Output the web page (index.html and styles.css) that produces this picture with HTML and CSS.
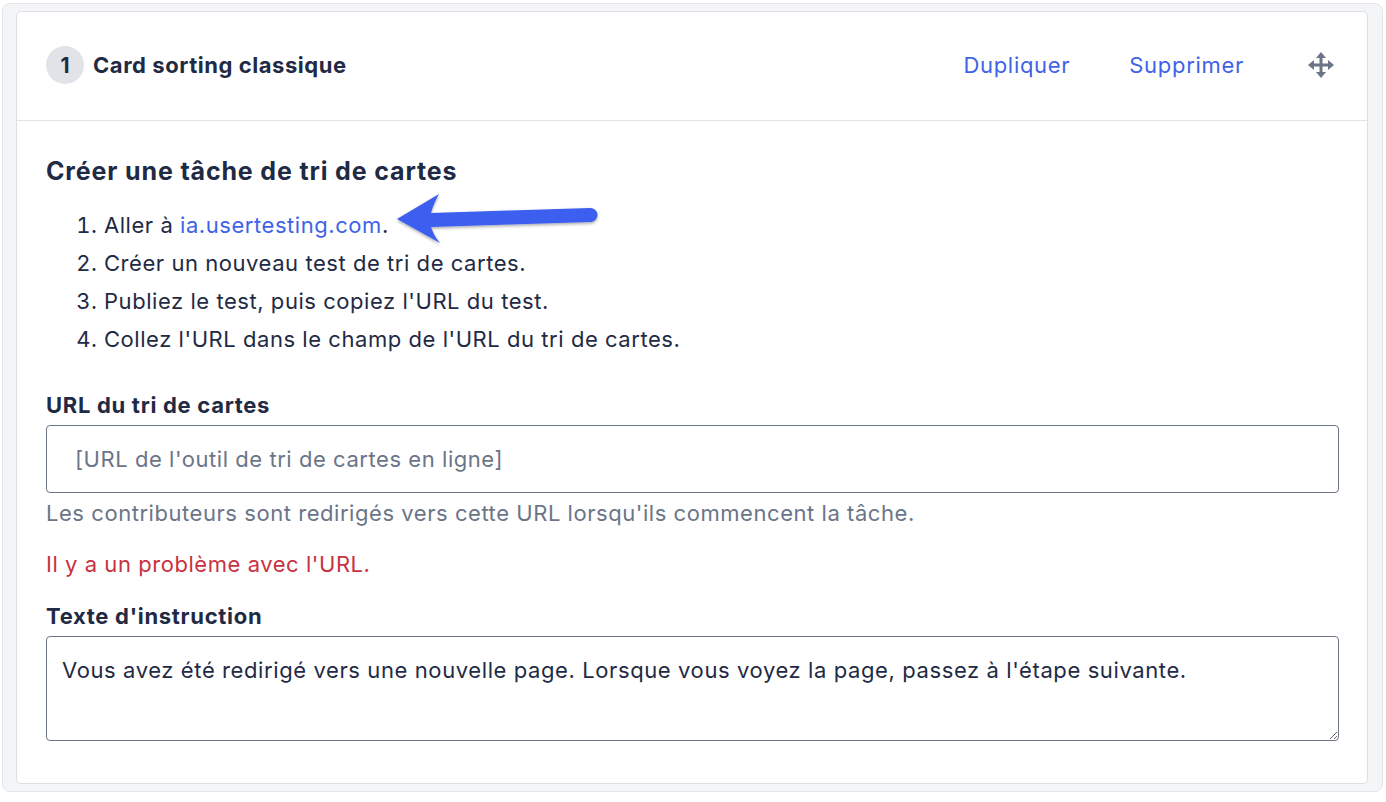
FILE: index.html
```html
<!DOCTYPE html>
<html lang="fr">
<head>
    <meta charset="UTF-8">
    <meta name="viewport" content="width=device-width, initial-scale=1.0">
    <title>Card sorting classique</title>
    <link rel="stylesheet" href="styles.css">
</head>
<body>

<div class="frame">
    <div class="card">
        <div class="card-header">
            <span class="step-badge">1</span>
            <h1 class="step-title">Card sorting classique</h1>
            <div class="header-actions">
                <a href="#" class="action-link">Dupliquer</a>
                <a href="#" class="action-link">Supprimer</a>
                <span class="move-handle" title="Déplacer">
                    <svg width="26" height="26" viewBox="0 0 26 26">
                        <g fill="#6b7586">
                            <rect x="11.5" y="4" width="3" height="18"/>
                            <rect x="4" y="11.5" width="18" height="3"/>
                            <polygon points="13,0 18,6 8,6"/>
                            <polygon points="13,26 18,20 8,20"/>
                            <polygon points="0,13 6,8 6,18"/>
                            <polygon points="26,13 20,8 20,18"/>
                        </g>
                    </svg>
                </span>
            </div>
        </div>

        <div class="card-body">
            <h2 class="section-title">Créer une tâche de tri de cartes</h2>
            <ol class="steps">
                <li>Aller à <a href="#" class="text-link">ia.usertesting.com</a>.</li>
                <li>Créer un nouveau test de tri de cartes.</li>
                <li>Publiez le test, puis copiez l'URL du test.</li>
                <li>Collez l'URL dans le champ de l'URL du tri de cartes.</li>
            </ol>

            <label class="field-label" for="card-url">URL du tri de cartes</label>
            <input type="text" id="card-url" class="url-input" placeholder="[URL de l'outil de tri de cartes en ligne]">
            <p class="help-text">Les contributeurs sont redirigés vers cette URL lorsqu'ils commencent la tâche.</p>
            <p class="error-text">Il y a un problème avec l'URL.</p>

            <label class="field-label" for="instructions">Texte d'instruction</label>
            <textarea id="instructions" class="instructions">Vous avez été redirigé vers une nouvelle page. Lorsque vous voyez la page, passez à l'étape suivante.</textarea>

            <!-- annotation arrow over the list -->
            <svg class="callout-arrow" width="240" height="70" viewBox="0 0 240 70">
                <defs>
                    <filter id="arrow-shadow" x="-10%" y="-30%" width="120%" height="160%">
                        <feDropShadow dx="0" dy="1.5" stdDeviation="1.5" flood-color="#000" flood-opacity="0.35"/>
                    </filter>
                </defs>
                <path d="M16 34 L58 9 Q52 20 50 28 L209 23 A7 7 0 0 1 210 37 L50 42 Q53 51 59 58 Z" fill="#3c5ff0" filter="url(#arrow-shadow)"/>
            </svg>
        </div>
    </div>
</div>

</body>
</html>
```

FILE: styles.css
```css
body {
    margin: 0;
    background: #fff;
    font-family: Inter, "Open Sans", sans-serif;
    letter-spacing: 0.55px;
    color: #1f2a44;
}
.frame {
    margin: 3px 3px 0 2px;
    padding: 7px 14px 7px 13px;
    background: #f4f5f7;
    border: 1px solid #e3e5e9;
    border-radius: 8px;
}
.card {
    background: #fff;
    border: 1px solid #dcdfe4;
    border-radius: 5px;
}
.card-header {
    display: flex;
    align-items: center;
    height: 106px;
    padding: 0 33px 2px 29px;
    border-bottom: 1px solid #dfe2e6;
}
.step-badge {
    width: 38px;
    height: 38px;
    border-radius: 50%;
    background: #e1e3e8;
    display: flex;
    align-items: center;
    justify-content: center;
    font-weight: bold;
    font-size: 21px;
    letter-spacing: 0;
    margin-right: 9px;
}
.step-title {
    margin: 0;
    font-size: 22px;
    font-weight: bold;
    flex: 1;
}
.header-actions {
    display: flex;
    align-items: center;
}
.action-link {
    color: #3e63e8;
    text-decoration: none;
    font-size: 22px;
    letter-spacing: 0.7px;
    margin-right: 59px;
}
.action-link + .action-link {
    margin-right: 64px;
}
.move-handle {
    display: flex;
    cursor: move;
}
.card-body {
    position: relative;
    padding: 35px 28px 42px 29px;
}
.section-title {
    margin: 0 0 20px;
    font-size: 25px;
    line-height: 30px;
    letter-spacing: 0.85px;
    font-weight: bold;
}
.steps {
    margin: 0 0 33px;
    padding-left: 58px;
    font-size: 22px;
    line-height: 38px;
}
.text-link {
    color: #3e63e8;
    text-decoration: none;
}
.field-label {
    display: block;
    font-size: 22px;
    line-height: 28px;
    letter-spacing: 0.7px;
    font-weight: bold;
    margin-bottom: 6px;
}
.url-input {
    display: block;
    box-sizing: border-box;
    width: 100%;
    height: 68px;
    padding: 0 28px;
    border: 1px solid #6b7586;
    border-radius: 4px;
    font-family: inherit;
    font-size: 22px;
    letter-spacing: inherit;
    color: #1f2a44;
}
.url-input::placeholder {
    color: #6b7588;
}
.help-text {
    margin: 6px 0 0;
    font-size: 22px;
    line-height: 28px;
    color: #6b7588;
}
.error-text {
    margin: 23px 0 24px;
    font-size: 22px;
    line-height: 28px;
    color: #c8323f;
}
.instructions {
    display: block;
    box-sizing: border-box;
    width: 100%;
    height: 105px;
    padding: 19px 15px;
    border: 1px solid #6b7586;
    border-radius: 4px;
    font-family: inherit;
    font-size: 22px;
    line-height: 28px;
    letter-spacing: 0.6px;
    color: #1f2a44;
    resize: vertical;
}
.callout-arrow {
    position: absolute;
    left: 364px;
    top: 64px;
}
```
